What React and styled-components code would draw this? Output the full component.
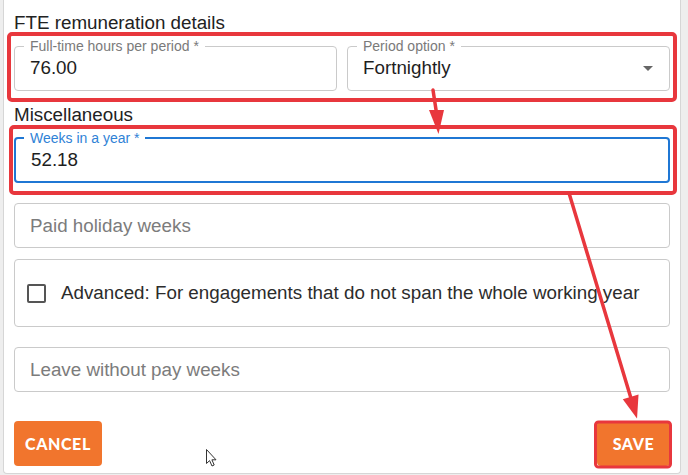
import React from "react";
import styled, { createGlobalStyle } from "styled-components";

const GlobalStyle = createGlobalStyle`
  html, body { margin: 0; padding: 0; }
  body { background: #eeeeee; font-family: "Liberation Sans", Arial, sans-serif; }
  * { box-sizing: border-box; }
`;

const Page = styled.div`
  position: relative;
  width: 688px;
  height: 475px;
  overflow: hidden;
  background: #eeeeee;
`;

const Card = styled.div`
  margin-left: 3px;
  width: 678px;
  height: 474px;
  background: #ffffff;
  border: 1px solid #d6d6d6;
  border-top: none;
  border-radius: 0 0 4px 4px;
  padding: 0 10px 7px 10px;
  display: flex;
  flex-direction: column;
`;

const Heading = styled.div`
  margin-top: ${(p) => p.$top}px;
  font-size: 18.8px;
  line-height: 20px;
  color: #222222;
`;

const Row = styled.div`
  margin-top: ${(p) => p.$top}px;
  display: grid;
  grid-template-columns: 1fr 1fr;
  gap: 10px;
`;

const Field = styled.div`
  position: relative;
  margin-top: ${(p) => p.$top || 0}px;
  height: ${(p) => p.$h || 45}px;
  border: ${(p) => (p.$focused ? "2px solid #1f77d4" : "1px solid #cacaca")};
  border-radius: 4px;
  display: flex;
  align-items: center;
  padding-left: 15px;
  padding-right: 16px;
  background: #fff;
`;

const Label = styled.span`
  position: absolute;
  left: ${(p) => (p.$focused ? 8 : 9)}px;
  top: -9px;
  padding: 0 6px;
  background: #fff;
  font-size: 14px;
  line-height: 16px;
  color: ${(p) => (p.$focused ? "#2f82d6" : "#7a7a7a")};
  white-space: nowrap;
`;

const Value = styled.span`
  flex: 1;
  font-size: 18.8px;
  line-height: 22px;
  color: ${(p) => (p.$placeholder ? "#7c7c7c" : "#1e1e1e")};
  margin-top: ${(p) => p.$dy || 0}px;
`;

const Caret = styled.span`
  width: 0;
  height: 0;
  border-left: 5.5px solid transparent;
  border-right: 5.5px solid transparent;
  border-top: 5.5px solid #666;
`;

const CheckRow = styled.div`
  margin-top: 11px;
  height: 68px;
  border: 1px solid #cacaca;
  border-radius: 4px;
  display: flex;
  align-items: center;
  padding-left: 12px;
  gap: 15px;
`;

const Box = styled.span`
  width: 19px;
  height: 19px;
  border: 2px solid #555;
  border-radius: 2px;
  flex: none;
`;

const CheckText = styled.span`
  font-size: 18.8px;
  line-height: 22px;
  color: #2c2c2c;
`;

const Actions = styled.div`
  margin-top: 29px;
  display: flex;
  justify-content: space-between;
`;

const Button = styled.button`
  height: 45px;
  min-width: 73px;
  padding: 0 11px;
  border: none;
  border-radius: 4px;
  background: #f1752d;
  color: #fff;
  font-family: Lato, "Open Sans", sans-serif;
  font-weight: 900;
  font-size: 16px;
  letter-spacing: 0.6px;
  display: flex;
  align-items: center;
  justify-content: center;
`;

const Overlay = styled.svg`
  position: absolute;
  left: 0;
  top: 0;
  pointer-events: none;
`;

const Cursor = styled.svg`
  position: absolute;
  left: 205px;
  top: 448px;
  pointer-events: none;
`;

const RED = "#e8373d";

export default function App() {
  return (
    <Page>
      <GlobalStyle />
      <Card>
        <Heading $top={13}>FTE remuneration details</Heading>
        <Row $top={13}>
          <Field>
            <Label>Full-time hours per period *</Label>
            <Value $dy={-1}>76.00</Value>
          </Field>
          <Field>
            <Label>Period option *</Label>
            <Value $dy={-1}>Fortnightly</Value>
            <Caret />
          </Field>
        </Row>
        <Heading $top={14}>Miscellaneous</Heading>
        <Field $top={12} $h={46} $focused>
          <Label $focused>Weeks in a year *</Label>
          <Value>52.18</Value>
        </Field>
        <Field $top={20}>
          <Value $placeholder>Paid holiday weeks</Value>
        </Field>
        <CheckRow>
          <Box />
          <CheckText>Advanced: For engagements that do not span the whole working year</CheckText>
        </CheckRow>
        <Field $top={20}>
          <Value $placeholder>Leave without pay weeks</Value>
        </Field>
        <Actions>
          <Button>CANCEL</Button>
          <Button>SAVE</Button>
        </Actions>
      </Card>

      <Overlay width="688" height="475" viewBox="0 0 688 475">
        <rect x="9" y="34" width="666" height="66" rx="3" fill="none" stroke={RED} strokeWidth="4" />
        <rect x="11" y="127" width="664" height="66" rx="3" fill="none" stroke={RED} strokeWidth="4" />
        <rect x="595.5" y="422" width="75" height="45" rx="3" fill="none" stroke={RED} strokeWidth="3" />
        <line x1="433" y1="90" x2="436.5" y2="113" stroke={RED} strokeWidth="3.5" strokeLinecap="round" />
        <polygon points="429,110 444,110 438.5,134" fill={RED} />
        <line x1="569" y1="193" x2="630.6" y2="397" stroke={RED} strokeWidth="3.5" strokeLinecap="round" />
        <polygon points="638.5,394.5 622.8,399.3 637,418.5" fill={RED} />
      </Overlay>

      <Cursor width="14" height="20" viewBox="0 0 14 20">
        <path d="M1.5 1.5 L1.5 15.5 L4.6 12.6 L7 18 L9.2 17 L6.9 11.8 L11 11.8 Z" fill="#fff" stroke="#333" strokeWidth="1" strokeLinejoin="round" />
      </Cursor>
    </Page>
  );
}
